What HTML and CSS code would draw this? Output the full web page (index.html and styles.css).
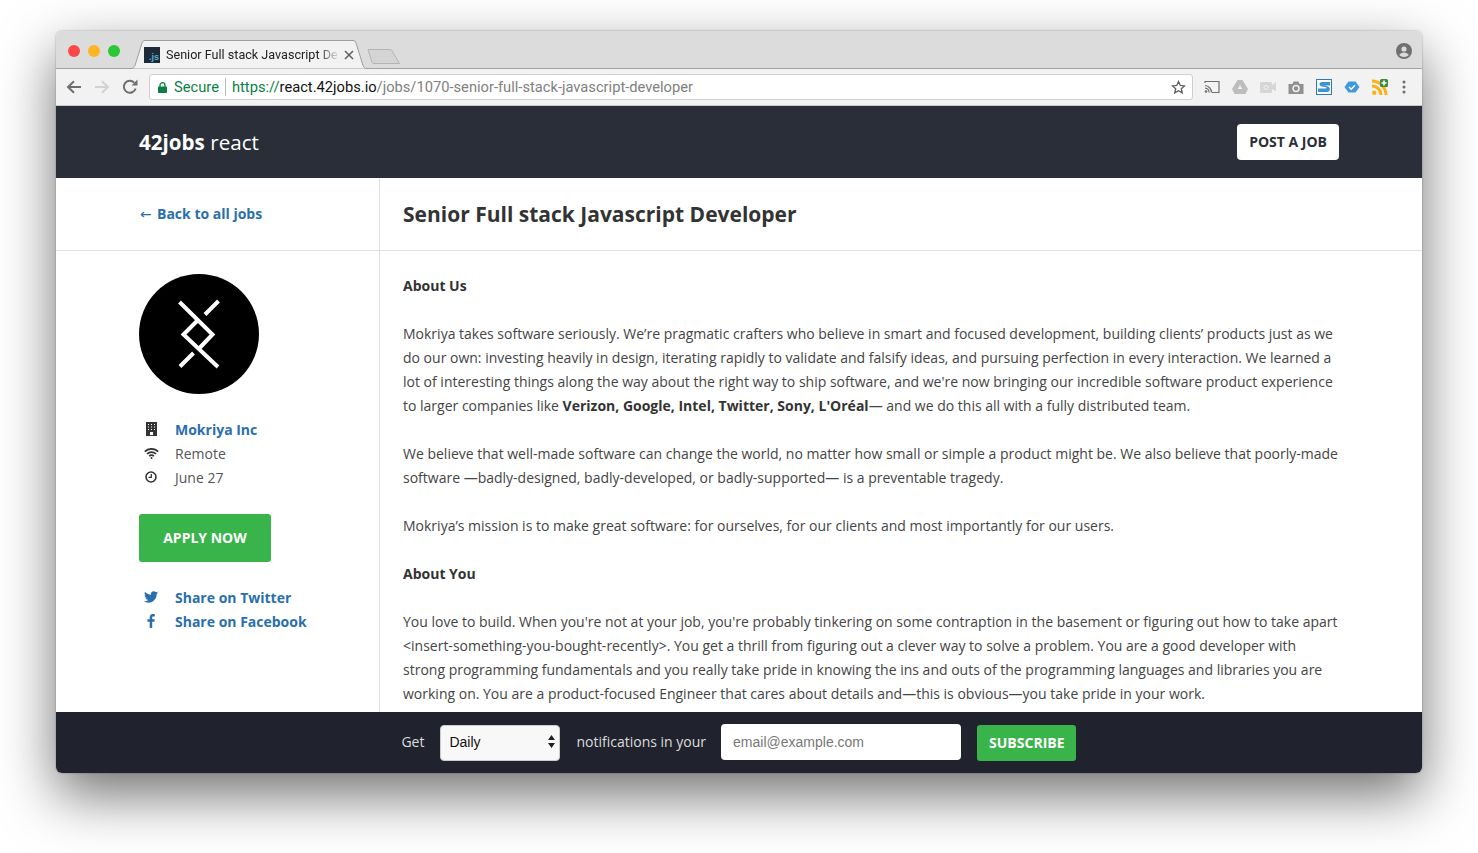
FILE: index.html
```html
<!DOCTYPE html>
<html lang="en">
<head>
<meta charset="utf-8">
<title>Senior Full stack Javascript Developer</title>
<link rel="stylesheet" href="styles.css">
</head>
<body>
<div class="window">
  <div class="tabstrip">
    <div class="lights"><span class="light red"></span><span class="light yellow"></span><span class="light green"></span></div>
    <div class="tab">
      <svg class="tab-shape" width="242" height="29" viewBox="0 0 242 29"><path d="M0 28.500H3C5 28.500 6 27.500 7 25.500L14 3C14.700 1.300 15.500 .5 17 .5H225C226.500 .5 227.300 1.300 228 3L235 25.500C236 27.500 237 28.500 239 28.500H242" fill="#f2f2f2" stroke="#9e9e9e"/></svg>
      <span class="favicon">.js</span>
      <span class="tab-title">Senior Full stack Javascript De</span>
      <svg class="tab-close" width="10" height="10" viewBox="0 0 10 10"><path d="M1 1l8 8M9 1l-8 8" stroke="#5f5f5f" stroke-width="1.500"/></svg>
    </div>
    <svg class="newtab" width="34" height="17" viewBox="0 0 34 17"><path d="M1 1.500h22c1 0 1.500.4 2 1.300l7.500 12.700H7c-1 0-1.500-.4-2-1.300z" fill="#d4d4d4" stroke="#b4b4b4"/></svg>
    <svg class="profile" width="16" height="16" viewBox="0 0 16 16"><circle cx="8" cy="8" r="8" fill="#707070"/><circle cx="8" cy="6" r="2.600" fill="#dcdcdc"/><path d="M3.200 12c.8-1.800 3-2.600 4.800-2.600s4 .8 4.800 2.600c-1.200 1.300-2.900 2-4.800 2s-3.600-.7-4.800-2z" fill="#dcdcdc"/></svg>
  </div>
  <div class="toolbar">
    <svg class="nav" width="16" height="14" viewBox="0 0 16 14"><path d="M15 7H2.500M8 1.200L2 7l6 5.800" fill="none" stroke="#6e6e6e" stroke-width="2"/></svg>
    <svg class="nav" width="16" height="14" viewBox="0 0 16 14"><path d="M1 7h12.500M8 1.200L14 7l-6 5.800" fill="none" stroke="#d2d2d2" stroke-width="2"/></svg>
    <svg class="nav" width="16" height="16" viewBox="0 0 16 16"><path d="M13.600 9.500A6 6 0 1 1 12.200 3.600" fill="none" stroke="#6e6e6e" stroke-width="2"/><path d="M9.500 6.500h6v-6z" fill="#6e6e6e"/></svg>
    <div class="omnibox">
      <svg class="lock" width="9" height="11" viewBox="0 0 9 11"><path d="M2 5V3.200a2.500 2.500 0 0 1 5 0V5" fill="none" stroke="#0b8043" stroke-width="1.300"/><rect y="4.500" width="9" height="6.500" rx=".8" fill="#0b8043"/></svg>
      <span class="secure">Secure</span>
      <span class="url"><span class="scheme">https://</span><span class="host">react.42jobs.io</span><span class="path">/jobs/1070-senior-full-stack-javascript-developer</span></span>
      <svg class="star" width="15" height="15" viewBox="0 0 15 15"><path d="M7.500 1.500l1.800 4 4.200.4-3.200 2.800 1 4.200-3.800-2.200-3.800 2.200 1-4.200L1.500 5.900l4.200-.4z" fill="none" stroke="#5f5f5f" stroke-width="1.300"/></svg>
    </div>
    <div class="extensions">
      <svg width="16" height="14" viewBox="0 0 16 14"><path d="M1 3V1.500h14v11H8M1 5.500a7 7 0 0 1 6.500 7M1 8a4.500 4.500 0 0 1 4 4.500" fill="none" stroke="#6e6e6e" stroke-width="1.200"/><circle cx="2" cy="11.500" r="1.300" fill="#6e6e6e"/></svg>
      <svg width="16" height="14" viewBox="0 0 16 14"><path d="M5.500 0h5L16 9l-2.500 5h-11L0 9z" fill="#bdbdbd"/><path d="M8 5l2.200 4H5.800z" fill="#f2f2f2"/></svg>
      <svg width="16" height="13" viewBox="0 0 16 13"><rect y="1" width="12" height="11" rx="1" fill="#d6d6d6"/><path d="M12 4l4-3v9l-4-2z" fill="#d6d6d6"/><circle cx="6" cy="6.500" r="2" fill="none" stroke="#f2f2f2"/></svg>
      <svg width="16" height="13" viewBox="0 0 15 13"><path d="M0 3h4l1-2.500h5L11 3h4v10H0z" fill="#909090"/><circle cx="7.500" cy="7.500" r="3" fill="none" stroke="#f2f2f2" stroke-width="1.500"/></svg>
      <svg width="16" height="16" viewBox="0 0 16 16"><rect x=".5" y=".5" width="15" height="15" fill="#fff" stroke="#2a7ab9"/><path d="M14 3H6C3 3 2.500 7 6 7.500l4 .8c1 .3.800 1.200-.2 1.200H2V13h9c3.500 0 4-5 .3-5.800L7.500 6.500h6.500z" fill="#3a93d3"/></svg>
      <svg width="16" height="12" viewBox="0 0 15 12"><path d="M4 .5h7L15 6l-4 5.500H4L0 6z" fill="#3f99dc"/><path d="M4.500 6l2.200 2.200 3.800-4" fill="none" stroke="#fff" stroke-width="1.400"/></svg>
      <svg width="16" height="16" viewBox="0 0 16 16"><circle cx="2.200" cy="13.800" r="2.200" fill="#fbb116"/><path d="M0 7a9 9 0 0 1 9 9M0 2a14 14 0 0 1 14 14" fill="none" stroke="#fbb116" stroke-width="3"/><rect x="8" width="8" height="8" rx="1.500" fill="#3d8b3d"/><path d="M12 1.500v5M9.500 4h5" stroke="#fff" stroke-width="1.600"/></svg>
      <svg class="menu-dots" width="4" height="14" viewBox="0 0 4 14"><circle cx="2" cy="2" r="1.500" fill="#6e6e6e"/><circle cx="2" cy="7" r="1.500" fill="#6e6e6e"/><circle cx="2" cy="12" r="1.500" fill="#6e6e6e"/></svg>
    </div>
  </div>
  <header class="site-header">
    <a class="brand" href="#"><b>42jobs</b> react</a>
    <a class="post-job" href="#">POST A JOB</a>
  </header>
  <main class="content">
    <aside class="sidebar">
      <div class="back-row"><a class="link" href="#"><span class="arrow">←</span>Back to all jobs</a></div>
      <div class="side-body">
        <svg class="logo" width="120" height="120" viewBox="0 0 120 120"><circle cx="60" cy="60" r="60" fill="#000"/><path d="M40.500 28L73.500 60.500 61 73.500M59 46L44.500 60.500 79 93M79.500 27L66 40.500M41 92.500L54.500 79" fill="none" stroke="#fff" stroke-width="4"/></svg>
        <ul class="facts">
          <li class="fact"><svg class="fact-icon" width="11" height="14" viewBox="0 0 11 14"><path fill-rule="evenodd" d="M0 0h11v14H0zM2 2v1h1V2zm3 0v1h1V2zm3 0v1h1V2zM2 4.500v1h1v-1zm3 0v1h1v-1zm3 0v1h1v-1zM2 7v1h1V7zm3 0v1h1V7zm3 0v1h1V7zM4 10v3h3v-3z" fill="#333"/></svg><a class="link" href="#">Mokriya Inc</a></li>
          <li class="fact"><svg class="fact-icon" width="15" height="11" viewBox="0 0 15 11"><path d="M.8 3.600a9.500 9.500 0 0 1 13.400 0M3 6a6.300 6.300 0 0 1 9 0M5.200 8.200a3.100 3.100 0 0 1 4.600 0" fill="none" stroke="#333" stroke-width="1.700"/><circle cx="7.500" cy="10" r="1" fill="#333"/></svg><span>Remote</span></li>
          <li class="fact"><svg class="fact-icon" width="12" height="12" viewBox="0 0 12 12"><circle cx="6" cy="6" r="5" fill="none" stroke="#333" stroke-width="1.600"/><path d="M6.300 3v3.300H3.500" fill="none" stroke="#333" stroke-width="1.300"/></svg><span>June 27</span></li>
        </ul>
        <a class="apply" href="#">APPLY NOW</a>
        <ul class="facts shares">
          <li class="fact"><svg class="fact-icon" width="14" height="12" viewBox="0 0 14 12"><path d="M14 1.500c-.5.200-1 .4-1.600.5.600-.4 1-.9 1.200-1.600-.6.300-1.200.6-1.800.7A2.900 2.900 0 0 0 6.900 3.700C4.500 3.600 2.400 2.400 1 .7c-.8 1.300-.4 3 .9 3.800-.5 0-.9-.1-1.300-.3 0 1.400 1 2.600 2.300 2.900-.4.100-.9.100-1.300 0 .4 1.200 1.500 2 2.700 2-1.200 1-2.800 1.400-4.300 1.200C1.300 11.200 2.800 11.700 4.400 11.700c5.400 0 8.400-4.500 8.200-8.500.6-.4 1-.9 1.400-1.700z" fill="#2a6fad"/></svg><a class="link" href="#">Share on Twitter</a></li>
          <li class="fact"><svg class="fact-icon" width="8" height="14" viewBox="0 0 8 14"><path d="M5.200 14V7.800h2.200l.3-2.500H5.200V3.700c0-.7.200-1.200 1.200-1.200h1.400V.2C7.500.1 6.800 0 5.900 0 4 0 2.700 1.200 2.700 3.300v2H.4v2.500h2.300V14z" fill="#2a6fad"/></svg><a class="link" href="#">Share on Facebook</a></li>
        </ul>
      </div>
    </aside>
    <article class="job">
      <h1 class="job-title">Senior Full stack Javascript Developer</h1>
      <div class="job-body">
        <p class="para"><strong>About Us</strong></p>
        <p class="para">Mokriya takes software seriously. We’re pragmatic crafters who believe in smart and focused development, building clients’ products just as we do our own: investing heavily in design, iterating rapidly to validate and falsify ideas, and pursuing perfection in every interaction. We learned a lot of interesting things along the way about the right way to ship software, and we're now bringing our incredible software product experience to larger companies like <strong>Verizon, Google, Intel, Twitter, Sony, L'Oréal</strong>— and we do this all with a fully distributed team.</p>
        <p class="para">We believe that well-made software can change the world, no matter how small or simple a product might be. We also believe that poorly-made software —badly-designed, badly-developed, or badly-supported— is a preventable tragedy.</p>
        <p class="para">Mokriya’s mission is to make great software: for ourselves, for our clients and most importantly for our users.</p>
        <p class="para"><strong>About You</strong></p>
        <p class="para">You love to build. When you're not at your job, you're probably tinkering on some contraption in the basement or figuring out how to take apart &lt;insert-something-you-bought-recently&gt;. You get a thrill from figuring out a clever way to solve a problem. You are a good developer with strong programming fundamentals and you really take pride in knowing the ins and outs of the programming languages and libraries you are working on. You are a product-focused Engineer that cares about details and—this is obvious—you take pride in your work.</p>
      </div>
    </article>
  </main>
  <footer class="subscribe">
    <span class="sub-label">Get</span>
    <div class="select"><span>Daily</span><svg width="7" height="13" viewBox="0 0 7 13"><path d="M3.500 0L7 5H0zM3.500 13L0 8h7z" fill="#222"/></svg></div>
    <span class="sub-label">notifications in your</span>
    <div class="email">email@example.com</div>
    <a class="sub-btn" href="#">SUBSCRIBE</a>
  </footer>
</div>
</body>
</html>
```
FILE: styles.css
```css
* { box-sizing: border-box; }
html, body { margin: 0; height: 100%; }
body {
  background: #fff;
  padding: 31px 56px 0;
  overflow: hidden;
  font-family: "Open Sans", sans-serif;
  color: #333;
}
a { text-decoration: none; }
ul { list-style: none; margin: 0; padding: 0; }

.window {
  width: 1366px;
  height: 742px;
  display: flex;
  flex-direction: column;
  border-radius: 6px;
  overflow: hidden;
  box-shadow: 0 22px 56px rgba(0, 0, 0, .56), 0 0 2px rgba(0, 0, 0, .35);
}

.tabstrip {
  height: 38px;
  flex: none;
  display: flex;
  align-items: flex-end;
  background: #dcdcdc;
  border-bottom: 1px solid #a4a4a4;
}
.lights { display: flex; gap: 8px; padding: 0 0 11px 12px; align-self: flex-end; }
.light { width: 12px; height: 12px; border-radius: 50%; }
.red { background: #fc4748; }
.yellow { background: #fdb524; }
.green { background: #2ac833; }
.tab {
  width: 242px;
  height: 29px;
  margin: 0 0 -1px 8px;
  position: relative;
  display: flex;
  align-items: center;
  padding: 1px 0 0 16px;
  flex: none;
}
.tab-shape { position: absolute; left: 0; top: 0; }
.favicon {
  position: relative;
  width: 16px;
  height: 16px;
  background: #1f2a38;
  color: #4fb4d8;
  font: 700 9px/20px "Liberation Sans", sans-serif;
  text-align: right;
  padding-right: 1px;
  flex: none;
}
.tab-title {
  position: relative;
  margin-left: 6px;
  width: 172px;
  font: 12.6px/16px Roboto, sans-serif;
  color: #222;
  white-space: nowrap;
  -webkit-mask-image: linear-gradient(90deg, #000 152px, transparent 174px);
  mask-image: linear-gradient(90deg, #000 152px, transparent 174px);
}
.tab-close { position: relative; margin-left: 6px; flex: none; }
.newtab { margin: 0 0 3px -3px; flex: none; }
.profile { margin: 0 10px 9px auto; align-self: flex-end; flex: none; }

.toolbar {
  height: 37px;
  flex: none;
  display: flex;
  align-items: center;
  background: #f2f2f2;
  border-bottom: 1px solid #c8c8c8;
  padding: 0 0 0 10px;
}
.nav { margin-right: 12px; flex: none; }
.toolbar .nav:nth-child(3) { margin-right: 11px; }
.omnibox {
  width: 1044px;
  height: 26px;
  flex: none;
  display: flex;
  align-items: center;
  background: #fff;
  border: 1px solid #cfcfcf;
  border-radius: 3px;
  padding: 0 6px 0 8px;
  font: 14.7px/18px Roboto, sans-serif;
  white-space: nowrap;
}
.lock { flex: none; }
.secure {
  color: #0b8043;
  margin-left: 7px;
  padding-right: 6px;
  border-right: 1px solid #b8b8b8;
}
.url { margin-left: 6px; }
.scheme { color: #0b8043; }
.host { color: #111; }
.path { color: #808080; }
.star { margin-left: auto; }
.extensions {
  flex: 1;
  display: flex;
  align-items: center;
  gap: 12px;
  padding-left: 11px;
}
.menu-dots { margin-left: 2px; }

.site-header {
  height: 72px;
  flex: none;
  display: flex;
  align-items: center;
  justify-content: space-between;
  background: #2a2e38;
  padding: 0 83px;
}
.brand { font-size: 20.6px; color: #fff; font-weight: 400; padding-bottom: 1px; }
.brand b { font-weight: 700; }
.post-job {
  height: 36px;
  display: flex;
  align-items: center;
  padding: 0 12px 2px;
  background: #fff;
  border-radius: 4px;
  color: #2a2e38;
  font-size: 14px;
  font-weight: 700;
}

.content { flex: 1; min-height: 0; display: flex; overflow: hidden; background: #fff; }
.sidebar { width: 324px; flex: none; border-right: 1px solid #dfe1e5; }
.back-row {
  height: 73px;
  display: flex;
  align-items: center;
  padding: 0 0 2px 83px;
  border-bottom: 1px solid #dfe1e5;
}
.link { color: #2a6fad; font-size: 14px; font-weight: 700; }
.arrow {
  display: inline-block;
  width: 18px;
  font-family: "DejaVu Sans", sans-serif;
  font-weight: 400;
  padding-left: 1px;
}
.side-body { padding: 23px 0 0 83px; display: flex; flex-direction: column; align-items: flex-start; }
.logo { display: block; }
.facts { margin-top: 23px; }
.fact {
  width: 200px;
  height: 24px;
  display: grid;
  grid-template-columns: 24px 1fr;
  column-gap: 12px;
  align-items: center;
  font-size: 14px;
  color: #555;
}
.fact-icon { justify-self: center; }
.apply {
  margin-top: 25px;
  width: 132px;
  height: 48px;
  display: flex;
  align-items: center;
  justify-content: center;
  padding-bottom: 2px;
  background: #38b44a;
  border-radius: 3px;
  color: #fff;
  font-size: 14px;
  font-weight: 700;
}
.shares { margin-top: 23px; }

.job { flex: 1; min-width: 0; }
.job-title {
  height: 73px;
  margin: 0;
  padding: 0 0 0 23px;
  display: flex;
  align-items: center;
  border-bottom: 1px solid #dfe1e5;
  font-size: 21px;
  font-weight: 700;
  color: #333;
}
.job-body { padding: 23px 83px 0 23px; }
.para { margin: 0 0 24px; font-size: 14px; line-height: 24px; color: #444; }
.para strong { color: #333; }

.subscribe {
  height: 61px;
  flex: none;
  display: flex;
  align-items: center;
  justify-content: center;
  gap: 16px;
  padding-right: 1px;
  background: #20232d;
  color: #ddd;
  font-size: 14px;
}
.sub-label { padding-bottom: 2px; }
.select {
  width: 120px;
  height: 36px;
  display: flex;
  align-items: center;
  justify-content: space-between;
  padding: 0 4px 2px 8px;
  background: #f8f8f8;
  border: 1px solid #ccc;
  border-radius: 4px;
  color: #111;
  font: 14px "Liberation Sans", sans-serif;
}
.email {
  width: 240px;
  height: 36px;
  margin: 0 0 2px -1px;
  display: flex;
  align-items: center;
  padding: 0 12px;
  background: #fff;
  border-radius: 4px;
  color: #777;
  font: 14px "Liberation Sans", sans-serif;
}
.sub-btn {
  height: 36px;
  display: flex;
  align-items: center;
  padding: 0 11px 0 12px;
  background: #38b44a;
  border-radius: 3px;
  color: #fff;
  font-size: 14px;
  font-weight: 700;
}
```
